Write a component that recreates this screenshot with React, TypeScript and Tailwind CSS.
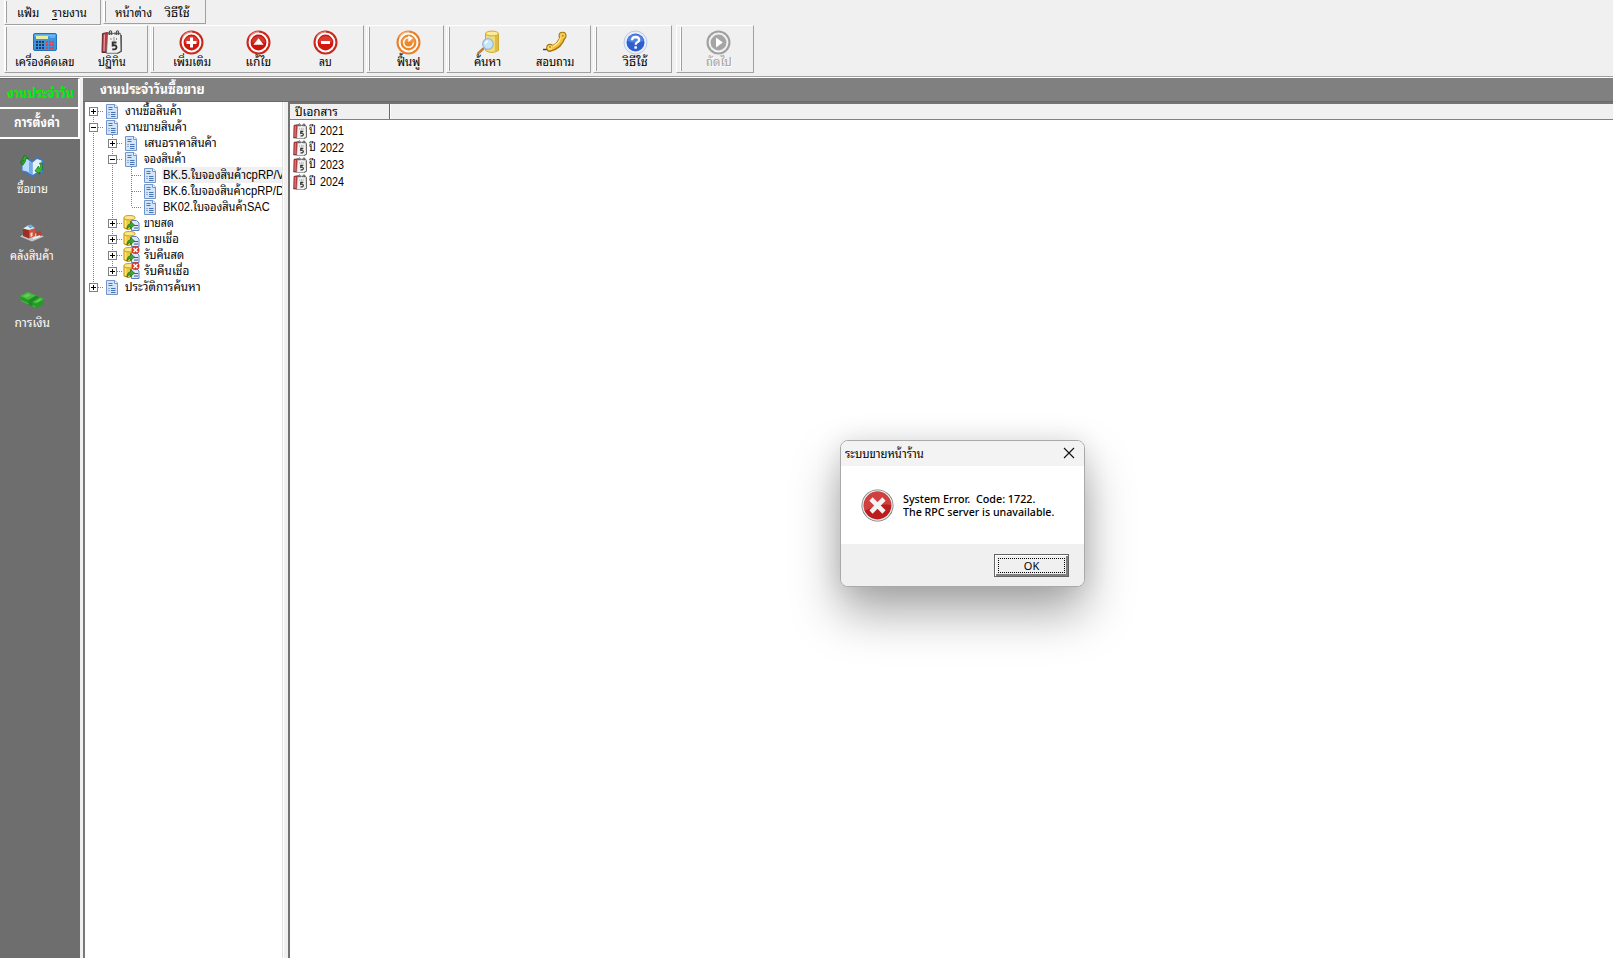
import { useLayoutEffect, useRef, type ReactNode } from "react";

function Fit({ w, className = "", children }: { w: number; className?: string; children: ReactNode }) {
  const ref = useRef<HTMLSpanElement>(null);
  useLayoutEffect(() => {
    const el = ref.current;
    if (el && el.offsetWidth) el.style.transform = `scaleX(${w / el.offsetWidth})`;
  }, [w]);
  return (
    <span className="flex shrink-0" style={{ width: w }}>
      <span ref={ref} className={`block w-max shrink-0 origin-left whitespace-pre ${className}`}>{children}</span>
    </span>
  );
}

const CalcIcon = () => (
  <svg width="24" height="18" viewBox="0 0 24 18">
    <rect x=".5" y=".5" width="23" height="17" rx="1.5" fill="#3f93dc" stroke="#2173bd" />
    <rect x="1.5" y="1.5" width="21" height="2" fill="#6bbcf5" />
    <rect x="3" y="3" width="12" height="3" fill="#e8ef9a" />
    <rect x="17" y="3" width="5" height="2" fill="#57b4f2" />
    <path d="M3 8h2v2H3zM6 8h2v2H6zM9 8h2v2H9zM3 11h2v2H3zM6 11h2v2H6zM9 11h2v2H9zM3 14h2v2H3zM6 14h2v2H6zM9 14h2v2H9z" fill="#1c3b66" />
    <path d="M13 8h2v2h-2zM16 8h2v2h-2zM19 8h2v2h-2zM13 11h2v2h-2zM16 11h2v2h-2zM19 11h2v2h-2zM13 14h2v2h-2zM16 14h5v2h-5z" fill="#d04a55" />
  </svg>
);

const CalendarIcon = ({ s = 24 }: { s?: number }) => (
  <svg width={s * 0.9} height={s} viewBox="0 0 21.600 24">
    <path d="M1.500 3.500 7 2.500l-.500 20-5.500 0z" fill="#c9303a" stroke="#5c2b2f" />
    <path d="M3.500 4.500 3 21" stroke="#f09a9a" strokeWidth="1.200" />
    <path d="M6.500 3.500h13l.7 17.500-4 2.300H5.500z" fill="#f1f1f1" stroke="#666" strokeWidth=".9" />
    <path d="M20.300 5v16.500l-4 2" fill="none" stroke="#555" strokeWidth="1.200" />
    <path d="M6 3.500h14" stroke="#666" strokeWidth="1.800" strokeDasharray="2 1.500" />
    <path d="M8.500 5V1.500q1-1.500 2 0V5M15.500 5V1.500q1-1.500 2 0V5" fill="none" stroke="#555" strokeWidth="1.200" />
    <path d="M10 8v2M12 8h2M12 10h2M15.500 8v2" stroke="#888" strokeWidth=".9" />
    <path d="M15.500 12.500h-3.800v3q3.500-1 3.800 1.700-.2 2.800-4.200 2" fill="none" stroke="#333" strokeWidth="1.900" />
  </svg>
);

const Ring = ({ outer, inner, children, rim = "#fff" }: { outer: string; inner: string; rim?: string; children: ReactNode }) => (
  <svg width="25" height="25" viewBox="0 0 25 25">
    <circle cx="12.500" cy="12.500" r="12" fill={outer} />
    <path d="M3.500 8A10 10 0 0 1 13 2" stroke="#fff" strokeOpacity=".45" strokeWidth="1.300" fill="none" />
    <circle cx="12.500" cy="12.500" r="9.900" fill={rim} />
    <circle cx="12.500" cy="12.500" r="7.900" fill={inner} />
    <path d="M5.500 13a7 7 0 0 1 14 0q-6-3-14 0" fill="#fff" fillOpacity=".16" />
    {children}
  </svg>
);
const AddIcon = () => <Ring outer="#c9281b" inner="#d3170c"><path d="M12.500 7.500v10M7.500 12.500h10" stroke="#fff" strokeWidth="3" /></Ring>;
const EditIcon = () => <Ring outer="#c9281b" inner="#c8150b"><path d="M12.500 8.200 17.700 14.800H7.300z" fill="#fff" /></Ring>;
const DeleteIcon = () => <Ring outer="#c9281b" inner="#d3170c"><path d="M8 12.500h9" stroke="#fff" strokeWidth="3" /></Ring>;
const RefreshIcon = () => (
  <Ring outer="#e8802a" inner="#ee8626">
    <path d="M17.300 12.500a4.800 4.800 0 1 1-5-4.800" fill="none" stroke="#fff" strokeWidth="1.500" />
    <path d="M12 5.400 17 8l-4.500 4.300z" fill="#fff" />
  </Ring>
);
const HelpIcon = () => (
  <svg width="25" height="25" viewBox="0 0 25 25">
    <circle cx="12.500" cy="12.500" r="11.500" fill="#e9eefa" stroke="#b8c9e8" />
    <circle cx="12.500" cy="12.500" r="9" fill="#2d5fd0" />
    <path d="M4.500 11a8.100 8.100 0 0 1 16 0q-8 3-16 0" fill="#6f9bec" fillOpacity=".6" />
    <path d="M9 10.300q.2-3.300 3.600-3.300 3.600.2 3.500 2.900 0 1.400-1.800 2.400-1.600.8-1.600 2.400" fill="none" stroke="#fff" strokeWidth="2.300" />
    <rect x="11.400" y="16.300" width="2.500" height="2.400" fill="#fff" />
  </svg>
);
const NextIcon = () => (
  <svg width="25" height="25" viewBox="0 0 25 25">
    <circle cx="12.500" cy="12.500" r="12" fill="#a0a0a0" />
    <circle cx="12.500" cy="12.500" r="9.900" fill="#f1f1f1" />
    <circle cx="12.500" cy="12.500" r="7.900" fill="#a5a5a5" />
    <path d="M10 7.500 16.800 12.500 10 17.500z" fill="#fff" />
  </svg>
);
const SearchIcon = () => (
  <svg width="24" height="25" viewBox="0 0 24 25">
    <path d="M9.500 3.500v17q6 4 13 0v-17z" fill="#f3dc72" stroke="#cfa935" />
    <path d="M19 5v17l3-1.500v-17z" fill="#dfbb45" />
    <ellipse cx="16" cy="3.500" rx="6.500" ry="2.400" fill="#fbeb9a" stroke="#cfa935" />
    <path d="M8 18 1.500 24" stroke="#c07c3c" strokeWidth="2.400" />
    <circle cx="12" cy="14" r="5.300" fill="#c5e6fa" stroke="#9db9d2" strokeWidth="1.300" />
    <path d="M9.500 14q0-2.500 2.500-3" stroke="#fff" strokeWidth="1.400" fill="none" />
  </svg>
);
const PhoneIcon = () => (
  <svg width="26" height="22" viewBox="0 0 26 22">
    <path d="M1 18.500h4l2 1" stroke="#444" strokeWidth="1.300" fill="none" />
    <path d="M7.500 18Q18 16 21 5" stroke="#a5740f" strokeWidth="6" strokeLinecap="round" fill="none" />
    <circle cx="8" cy="16.500" r="3.700" fill="#a5740f" />
    <circle cx="20.500" cy="4.800" r="4" fill="#a5740f" />
    <path d="M7.500 17.500Q17.500 15.500 20.800 5" stroke="#f3bf35" strokeWidth="4" strokeLinecap="round" fill="none" />
    <circle cx="8" cy="16.500" r="2.600" fill="#fbdc6c" />
    <circle cx="20.500" cy="4.600" r="2.900" fill="#f9d04f" />
    <circle cx="8" cy="16" r="1" fill="#c08a1c" />
    <circle cx="20.800" cy="4.800" r="1" fill="#c08a1c" />
    <path d="M11 15.500Q17 12.500 18.500 7" stroke="#fdf0ac" strokeWidth="1.100" fill="none" />
  </svg>
);

const DocIcon = () => (
  <svg width="12" height="15" viewBox="0 0 12 15">
    <path d="M.5.500h8.500l2.500 2.500v11.500H.5z" fill="#d3e5fa" stroke="#7397cb" />
    <path d="M8.500 .500v3h3" fill="#fff" stroke="#7397cb" />
    <path d="M2.500 3.500h4M2.500 5.500h4M2.500 8.500h1M5 8.500h4.500M2.500 10.500h1M5 10.500h4.500M5 12.500h4.500" stroke="#4a74b4" />
  </svg>
);
const SaleIcon = ({ cancelled }: { cancelled?: boolean }) => (
  <svg width="17" height="16" viewBox="0 0 17 16" overflow="visible">
    <path d="M1 3v10q4 3 9 0V3z" fill="#efc83c" stroke="#b68b18" />
    <path d="M2.500 4.500v8" stroke="#fbe88a" strokeWidth="1.500" />
    <path d="M8.500 5.500h5l2.500 2.500v7.500H8.500z" fill="#dce9fb" stroke="#5d80bd" />
    <path d="M11 10.500h4M11 13h4" stroke="#345f9f" />
    <path d="M1 2.700q0 2.200 5.500 2.200t5.500-2.200T6.500.500 1 2.700z" fill="#fbe88a" stroke="#c79a20" />
    <path d="M4 14q0-5 3.500-5V6.500L11.500 10l-4 3.500v-2Q5 11.500 4 14z" fill="#3fa535" stroke="#1d6c1b" strokeWidth=".7" />
    {cancelled && (
      <>
        <circle cx="12.500" cy="3" r="4" fill="#da3429" />
        <path d="M10.500 1l4 4M14.500 1l-4 4" stroke="#fff" strokeWidth="1.500" />
      </>
    )}
  </svg>
);

const TradeIcon = () => (
  <svg width="24" height="23" viewBox="0 0 24 23">
    <path d="M1 4.500 7 2.500 12 6l5-3.500 6 2v13l-6 1-5 4-5-4-6-2z" fill="#3b78cf" />
    <path d="M2.500 5 7 4l4.500 3.500v12L7 16.500l-4.500-1z" fill="#b9dcf8" />
    <path d="M12.500 7.500 17 4l4.500 1.500v11l-5 1-4 2.500z" fill="#e2f1fd" />
    <path d="M9 6.500 11.500 8v11.500L9 17.500z" fill="#72ade9" />
    <path d="M.5 8 4.500 0l4 3.500H6q0 3-3 6.500H1.500L4 5z" fill="#2fae27" stroke="#126c13" strokeWidth=".7" />
    <path d="M22 8q2 7-2.500 9l.5 2-5-3 3.500-5 .6 2.500Q22 12 19.500 8z" fill="#3dbb2f" stroke="#126c13" strokeWidth=".7" />
  </svg>
);
const WarehouseIcon = () => (
  <svg width="24" height="18" viewBox="0 0 24 18">
    <path d="M0 12.500 9 7l15 5.500-12 5z" fill="#c5c5c5" />
    <path d="M3 4.500 9 6v8.500L3 12z" fill="#9d2f25" />
    <path d="M9 6l6-2v8l-6 2.500z" fill="#d05340" />
    <path d="M3 4.500 9 1l6 3-6 2z" fill="#e6eff8" />
    <path d="M7 1.500 11 .500 14 3l-4 1.500z" fill="#6bb0dd" />
    <path d="M16.500 8 21 7v4.500l-4.500 1.700z" fill="#bd3f31" />
    <path d="M10.500 13v-4l2-.8V12z" fill="#f1dfdb" />
    <path d="M13 14.500 20 12" stroke="#f4f4f4" strokeWidth="1.500" />
  </svg>
);
const MoneyIcon = () => (
  <svg width="24" height="18" viewBox="0 0 24 18">
    <path d="M0 5 8 1l16 7v5l-8 4.500L1 10z" fill="#259a27" />
    <path d="M0 5 8 1l16 7-8 4.500z" fill="#46bb3f" />
    <path d="M1 9.500 15.500 16" stroke="#5cc553" strokeWidth=".8" />
    <path d="M8.500 9 16 4.500l4 1.700-7.500 4.800v4.500L8.500 13.500z" fill="#1f8a23" />
    <path d="M3.500 5 8 2.800l3 1.300-4.500 2.300z" fill="#66cc5a" />
    <path d="M16 10.500l4-2.200 1.500.7-4 2.200z" fill="#66cc5a" />
  </svg>
);

const ErrorIcon = () => (
  <svg width="33" height="33" viewBox="0 0 33 33">
    <circle cx="16.500" cy="16.500" r="16" fill="#777" />
    <circle cx="16.500" cy="16.500" r="15.200" fill="#eee" />
    <circle cx="16.500" cy="16.500" r="13.900" fill="#bb1c1d" />
    <path d="M3 16a13.500 13.500 0 0 1 27 0q-10-2-27 6z" fill="#da5552" fillOpacity=".65" />
    <path d="m10 10 13 13M23 10 10 23" stroke="#f4f4f4" strokeWidth="4.600" />
  </svg>
);

const Band = ({ className, grip = "left-0", children }: { className: string; grip?: string; children?: ReactNode }) => (
  <div className={`relative flex shrink-0 border-r border-[#a0a0a0] border-b border-l border-l-white border-t border-t-white ${className}`}>
    <span className={`absolute top-[1px] bottom-[1px] w-[2px] border-r border-l border-l-white border-[#a0a0a0] ${grip}`} />
    {children}
  </div>
);

const Tool = ({ icon, label, w, off }: { icon: ReactNode; label: string; w: number; off?: boolean }) => (
  <div className="flex w-[67px] shrink-0 flex-col items-center pt-[3px]">
    <span className="flex h-[26px] items-center">{icon}</span>
    <Fit w={w} className={`-mt-px text-[12px] leading-[16px] ${off ? "text-[#a0a0a0] [text-shadow:1px_1px_0_#fff]" : ""}`}>{label}</Fit>
  </div>
);

const MENU = "pt-[2px] text-[12px] leading-[16px]";

const tree: { level: number; mark: string; icon: string; text: string; w: number }[] = [
  { level: 0, mark: "+", icon: "doc", text: "งานซื้อสินค้า", w: 57 },
  { level: 0, mark: "-", icon: "doc", text: "งานขายสินค้า", w: 62 },
  { level: 1, mark: "+", icon: "doc", text: "เสนอราคาสินค้า", w: 73 },
  { level: 1, mark: "-", icon: "doc", text: "จองสินค้า", w: 42 },
  { level: 2, mark: "", icon: "doc", text: "BK.5.ใบจองสินค้าcpRP/V", w: 121 },
  { level: 2, mark: "", icon: "doc", text: "BK.6.ใบจองสินค้าcpRP/D", w: 121 },
  { level: 2, mark: "", icon: "doc", text: "BK02.ใบจองสินค้าSAC", w: 107 },
  { level: 1, mark: "+", icon: "sale", text: "ขายสด", w: 30 },
  { level: 1, mark: "+", icon: "sale", text: "ขายเชื่อ", w: 35 },
  { level: 1, mark: "+", icon: "ret", text: "รับคืนสด", w: 40 },
  { level: 1, mark: "+", icon: "ret", text: "รับคืนเชื่อ", w: 45 },
  { level: 0, mark: "+", icon: "doc", text: "ประวัติการค้นหา", w: 76 },
];

const Rail = ({ kind }: { kind: string }) => (
  <svg width="19" height="16" viewBox="0 0 19 16" className="shrink-0">
    {kind !== "none" && <path d={kind === "end" ? "M8.500 0v8" : "M8.500 0v16"} stroke="#808080" strokeDasharray="1 1" />}
    {(kind === "mid" || kind === "end") && <path d="M9 8.500h10" stroke="#808080" strokeDasharray="1 1" />}
  </svg>
);

const Expander = ({ mark, first, last }: { mark: string; first: boolean; last: boolean }) => (
  <svg width="19" height="16" viewBox="0 0 19 16" className="shrink-0">
    <path d={first ? "M8.500 8v8" : last ? "M8.500 0v8" : "M8.500 0v16"} stroke="#808080" strokeDasharray="1 1" />
    <path d="M13 8.500h6" stroke="#808080" strokeDasharray="1 1" />
    <rect x="4.500" y="4.500" width="8" height="8" fill="#fff" stroke="#808080" />
    <path d={mark === "+" ? "M6 8.500h5M8.500 6v5" : "M6 8.500h5"} stroke="#000" />
  </svg>
);

const SideItem = ({ icon, label, w }: { icon: ReactNode; label: string; w: number }) => (
  <div className="flex h-[67px] w-[64px] flex-col items-center text-white">
    <span className="flex h-[26px] items-center">{icon}</span>
    <Fit w={w} className="text-[12px] leading-[20px]">{label}</Fit>
  </div>
);

export default function App() {
  return (
    <div className="relative flex h-[958px] w-[1613px] flex-col overflow-hidden bg-[#f0f0f0] font-['Liberation_Sans','Noto_Sans_Thai_Looped','Loma','Noto_Sans_Thai',sans-serif] text-black">
      <div className="flex h-[25px] shrink-0 items-start pl-1">
        <Band className="h-[25px] w-[97px] items-center gap-[13px] border-t-0 pl-[12px]">
          <Fit w={22} className={MENU}>แฟ้ม</Fit>
          <Fit w={35} className={MENU}><u className="underline-offset-2">ร</u>ายงาน</Fit>
        </Band>
        <Band className="ml-[2px] h-[24px] w-[103px] items-center gap-[13px] border-t-0 pl-[11px]">
          <Fit w={37} className={MENU}>หน้าต่าง</Fit>
          <Fit w={25} className={MENU}>วิธีใช้</Fit>
        </Band>
      </div>
      <div className="flex h-[48px] shrink-0 pl-1">
        <Band className="w-[144px] pl-[6px]">
          <Tool icon={<CalcIcon />} label="เครื่องคิดเลข" w={59} />
          <Tool icon={<CalendarIcon />} label="ปฏิทิน" w={28} />
        </Band>
        <Band className="ml-[2px] w-[214px] pl-[7px]" grip="left-px">
          <Tool icon={<AddIcon />} label="เพิ่มเติม" w={38} />
          <Tool icon={<EditIcon />} label="แก้ไข" w={26} />
          <Tool icon={<DeleteIcon />} label="ลบ" w={13} />
        </Band>
        <Band className="ml-[2px] w-[78px] pl-[8px]" grip="left-px">
          <Tool icon={<RefreshIcon />} label="ฟื้นฟู" w={23} />
        </Band>
        <Band className="ml-[2px] w-[145px] pl-[7px]" grip="left-px">
          <Tool icon={<SearchIcon />} label="ค้นหา" w={27} />
          <Tool icon={<PhoneIcon />} label="สอบถาม" w={38} />
        </Band>
        <Band className="ml-[2px] w-[79px] pl-[8px]" grip="left-px">
          <Tool icon={<HelpIcon />} label="วิธีใช้" w={25} />
        </Band>
        <Band className="ml-[4px] w-[78px] pl-[8px]" grip="left-[3px]">
          <Tool icon={<NextIcon />} label="ถัดไป" w={26} off />
        </Band>
      </div>
      <div className="mt-[3px] h-[2px] shrink-0 border-t border-b border-t-[#a0a0a0] border-b-white" />
      <div className="flex min-h-0 flex-1">
        <aside className="flex w-[80px] shrink-0 flex-col bg-[#6e6e6e]">
          <div className="flex h-[29px] shrink-0 items-center border-t border-r-2 border-t-[#696969] border-r-white bg-[#808080] pl-[7px]">
            <Fit w={67} className="pt-px text-[13px] leading-[20px] font-bold text-[#00f000]">งานประจำวัน</Fit>
          </div>
          <div className="flex h-[32px] shrink-0 items-center border-t-2 border-r-2 border-b-2 border-white bg-[#808080] pl-[14px]">
            <Fit w={46} className="text-[13px] leading-[20px] font-bold text-white">การตั้งค่า</Fit>
          </div>
          <div className="flex flex-col pt-[14px]">
            <SideItem icon={<TradeIcon />} label="ซื้อขาย" w={31} />
            <SideItem icon={<WarehouseIcon />} label="คลังสินค้า" w={44} />
            <SideItem icon={<MoneyIcon />} label="การเงิน" w={35} />
          </div>
        </aside>
        <div className="w-[3px] shrink-0 bg-[#f0f0f0]" />
        <main className="flex min-w-0 flex-1 flex-col">
          <header className="flex h-[24px] shrink-0 items-center border-b border-[#696969] bg-[#808080] pl-[17px]">
            <Fit w={105} className="text-[13px] leading-[20px] font-bold text-white">งานประจำวันซื้อขาย</Fit>
          </header>
          <div className="flex min-h-0 flex-1">
            <section className="flex w-[200px] shrink-0 flex-col overflow-hidden border-r border-l-2 border-r-[#e3e3e3] border-l-[#787878] bg-white pt-px">
              {tree.map((n, i) => (
                <div key={n.text} className="flex h-[16px] shrink-0 items-center">
                  {n.level === 0 ? (
                    <Expander mark={n.mark} first={i === 0} last={i === 11} />
                  ) : (
                    <>
                      <Rail kind="pass" />
                      {n.level === 1 ? (
                        <Expander mark={n.mark} first={false} last={i === 10} />
                      ) : (
                        <>
                          <Rail kind="pass" />
                          <Rail kind={i === 6 ? "end" : "mid"} />
                        </>
                      )}
                    </>
                  )}
                  <span className="flex w-[20px] shrink-0 pl-[2px]">
                    {n.icon === "doc" ? <DocIcon /> : <span className="-ml-[2px]"><SaleIcon cancelled={n.icon === "ret"} /></span>}
                  </span>
                  <span className={i === 4 ? "h-[16px] bg-[#f0f0f0]" : "h-[16px]"}>
                    <Fit w={n.w} className={n.level === 2 ? "ml-px text-[13px] leading-[16px]" : "ml-px text-[12px] leading-[16px]"}>{n.text}</Fit>
                  </span>
                </div>
              ))}
            </section>
            <div className="w-[5px] shrink-0 border-l border-white bg-[#f0f0f0]" />
            <section className="flex min-w-0 flex-1 flex-col border-t-2 border-l-2 border-[#737373] bg-white">
              <div className="flex h-[16px] shrink-0 border-b border-[#808080] bg-[#f0f0f0]">
                <div className="flex w-[100px] items-center border-r border-[#696969] pl-[5px]">
                  <Fit w={43} className="pt-px text-[12px] leading-[15px]">ปีเอกสาร</Fit>
                </div>
                <div className="flex-1 border-l border-white" />
              </div>
              <div className="flex flex-col pt-[2px]">
                {[2021, 2022, 2023, 2024].map((y) => (
                  <div key={y} className="flex h-[17px] items-center pl-[3px]">
                    <CalendarIcon s={16} />
                    <span className="ml-[2px] flex">
                      <Fit w={7} className="text-[12px] leading-[17px]">ปี</Fit>
                      <span className="w-[4px]" />
                      <Fit w={24} className="text-[13px] leading-[17px]">{y}</Fit>
                    </span>
                  </div>
                ))}
              </div>
            </section>
          </div>
        </main>
      </div>

      <div role="dialog" className="absolute top-[440px] left-[840px] flex h-[147px] w-[245px] flex-col overflow-hidden rounded-[8px] border border-[#a9a9a9] bg-white shadow-[0_26px_48px_rgba(0,0,0,0.34),0_0_26px_rgba(0,0,0,0.1)]">
        <div className="flex h-[25px] shrink-0 items-center justify-between bg-[#f3f3f3] pr-[9px] pb-[1px] pl-[4px]">
          <Fit w={79} className="pt-[2px] text-[12px] leading-[18px]">ระบบขายหน้าร้าน</Fit>
          <svg width="12" height="12" viewBox="0 0 12 12"><path d="m1 1 10 10M11 1 1 11" stroke="#111" strokeWidth="1.100" /></svg>
        </div>
        <div className="flex h-[78px] shrink-0 items-center pl-[20px]">
          <ErrorIcon />
          <div className="ml-[9px] font-['Noto_Sans'] text-[11px] leading-[13px] font-medium">
            <Fit w={132}>{"System Error.  Code: 1722."}</Fit>
            <Fit w={151}>The RPC server is unavailable.</Fit>
          </div>
        </div>
        <div className="flex flex-1 justify-end bg-[#f0f0f0] pt-[10px] pr-[15px]">
          <button className="flex h-[23px] w-[75px] border border-[#646464] bg-[#f0f0f0] p-[3px] shadow-[inset_1px_1px_0_#fff,inset_-2px_-2px_0_#808080]">
            <span className="flex h-full w-full items-center justify-center border border-dotted border-black font-['Noto_Sans'] text-[11px] leading-none">OK</span>
          </button>
        </div>
      </div>
    </div>
  );
}
